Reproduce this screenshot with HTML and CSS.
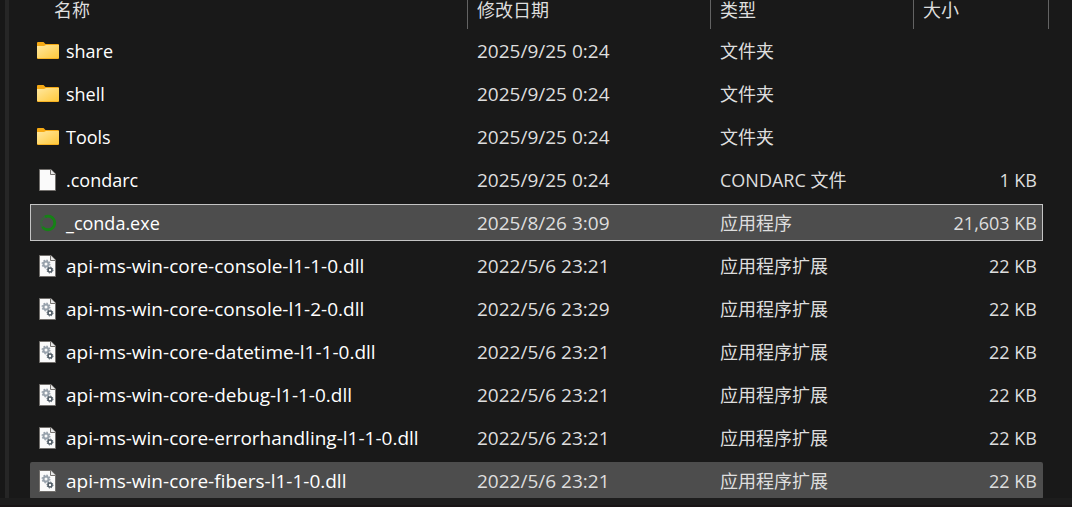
FILE: index.html
```html
<!DOCTYPE html>
<html lang="zh-CN">
<head>
    <meta charset="UTF-8">
    <meta name="viewport" content="width=device-width, initial-scale=1.0">
    <title>文件列表</title>
    <link rel="stylesheet" href="styles.css">
</head>
<body>
    <!-- Icon shapes shared by the rows -->
    <svg class="icon-defs" aria-hidden="true">
        <linearGradient id="folder-fill" x1="0" y1="0" x2="1" y2="1">
            <stop offset="0" stop-color="#ffe8a0"/>
            <stop offset="1" stop-color="#ffc83a"/>
        </linearGradient>
        <symbol id="icon-folder" viewBox="0 0 22 22">
            <path d="M0 3Q0 2 1 2H6.500L8.500 4H21Q22 4 22 5V18Q22 19 21 19H1Q0 19 0 18Z" fill="#f5a914"/>
            <path d="M0 6H7L9 5H22V17.500Q22 18.300 21 18.300H1Q0 18.300 0 17.500Z" fill="url(#folder-fill)"/>
        </symbol>
        <symbol id="icon-page" viewBox="0 0 22 22">
            <path d="M2.500 .5H14L18.500 5V21.500H2.500Z" fill="#fafafa" stroke="#73706d"/>
            <path d="M13.500 .5V5.500H18.500" fill="#e8e8e8" stroke="#73706d"/>
        </symbol>
        <symbol id="icon-dll" viewBox="0 0 22 22">
            <use href="#icon-page"/>
            <circle cx="9" cy="9" r="2.500" fill="none" stroke="#98a2ac" stroke-width="2"/>
            <circle cx="9" cy="9" r="3.800" fill="none" stroke="#98a2ac" stroke-width="1.400" stroke-dasharray="1.500 1.480"/>
            <circle cx="13" cy="15" r="2" fill="none" stroke="#505c66" stroke-width="1.600"/>
            <circle cx="13" cy="15" r="3" fill="none" stroke="#505c66" stroke-width="1" stroke-dasharray="1.200 1.150"/>
        </symbol>
        <symbol id="icon-conda" viewBox="0 0 22 22">
            <circle cx="11" cy="11" r="6.800" fill="none" stroke="#35673a" stroke-width="2.400" stroke-dasharray="1.500 .6"/>
            <path d="M8 4.800A6.800 6.800 0 1 1 5.500 15" fill="none" stroke="#168216" stroke-width="2.800"/>
        </symbol>
    </svg>

    <div class="window">
        <div class="content">
            <div class="nav-edge"></div>
            <main class="file-list">
                <table>
                    <colgroup>
                        <col class="col-name">
                        <col class="col-date">
                        <col class="col-type">
                        <col class="col-size">
                        <col class="col-end">
                    </colgroup>
                    <thead>
                        <tr>
                            <th>名称</th>
                            <th>修改日期</th>
                            <th>类型</th>
                            <th colspan="2">大小</th>
                        </tr>
                    </thead>
                    <tbody>
                        <tr>
                            <td><svg class="icon"><use href="#icon-folder"/></svg>share</td>
                            <td>2025/9/25 0:24</td>
                            <td>文件夹</td>
                            <td></td>
                        </tr>
                        <tr>
                            <td><svg class="icon"><use href="#icon-folder"/></svg>shell</td>
                            <td>2025/9/25 0:24</td>
                            <td>文件夹</td>
                            <td></td>
                        </tr>
                        <tr>
                            <td><svg class="icon"><use href="#icon-folder"/></svg>Tools</td>
                            <td>2025/9/25 0:24</td>
                            <td>文件夹</td>
                            <td></td>
                        </tr>
                        <tr>
                            <td><svg class="icon"><use href="#icon-page"/></svg>.condarc</td>
                            <td>2025/9/25 0:24</td>
                            <td>CONDARC 文件</td>
                            <td>1 KB</td>
                        </tr>
                        <tr class="selected focused">
                            <td><svg class="icon"><use href="#icon-conda"/></svg>_conda.exe</td>
                            <td>2025/8/26 3:09</td>
                            <td>应用程序</td>
                            <td>21,603 KB</td>
                        </tr>
                        <tr class="library">
                            <td><svg class="icon"><use href="#icon-dll"/></svg>api-ms-win-core-console-l1-1-0.dll</td>
                            <td>2022/5/6 23:21</td>
                            <td>应用程序扩展</td>
                            <td>22 KB</td>
                        </tr>
                        <tr class="library">
                            <td><svg class="icon"><use href="#icon-dll"/></svg>api-ms-win-core-console-l1-2-0.dll</td>
                            <td>2022/5/6 23:29</td>
                            <td>应用程序扩展</td>
                            <td>22 KB</td>
                        </tr>
                        <tr class="library">
                            <td><svg class="icon"><use href="#icon-dll"/></svg>api-ms-win-core-datetime-l1-1-0.dll</td>
                            <td>2022/5/6 23:21</td>
                            <td>应用程序扩展</td>
                            <td>22 KB</td>
                        </tr>
                        <tr class="library">
                            <td><svg class="icon"><use href="#icon-dll"/></svg>api-ms-win-core-debug-l1-1-0.dll</td>
                            <td>2022/5/6 23:21</td>
                            <td>应用程序扩展</td>
                            <td>22 KB</td>
                        </tr>
                        <tr class="library">
                            <td><svg class="icon"><use href="#icon-dll"/></svg>api-ms-win-core-errorhandling-l1-1-0.dll</td>
                            <td>2022/5/6 23:21</td>
                            <td>应用程序扩展</td>
                            <td>22 KB</td>
                        </tr>
                        <tr class="library selected">
                            <td><svg class="icon"><use href="#icon-dll"/></svg>api-ms-win-core-fibers-l1-1-0.dll</td>
                            <td>2022/5/6 23:21</td>
                            <td>应用程序扩展</td>
                            <td>22 KB</td>
                        </tr>
                    </tbody>
                </table>
            </main>
        </div>
        <footer class="status-bar"></footer>
    </div>
</body>
</html>
```
FILE: styles.css
```css
* {
    box-sizing: border-box;
}

body {
    margin: 0;
    background-color: #191919;
    color: #dedede;
    font-family: "Open Sans", "Noto Sans CJK SC", sans-serif;
    font-size: 18px;
    line-height: 24px;
}

.icon-defs {
    position: absolute;
    width: 0;
    height: 0;
}

.window {
    display: flex;
    flex-direction: column;
    height: 100vh;
}

.content {
    display: flex;
    flex: 1;
    min-height: 0;
}

.nav-edge {
    width: 9px;
    border-right: 4px solid #262626;
    background-color: #171717;
}

.file-list {
    flex: 1;
    min-width: 0;
    padding: 0 23px 0 21px;
    overflow: hidden;
}

table {
    width: 100%;
    table-layout: fixed;
    border-collapse: separate;
    border-spacing: 0;
}

.col-date {
    width: 243px;
}

.col-type {
    width: 203px;
}

.col-size {
    width: 129px;
}

.col-end {
    width: 6px;
}

th {
    height: 29px;
    padding: 0 9px 8px;
    border-right: 1px solid #636363;
    font-weight: normal;
    line-height: 21px;
    text-align: left;
}

th:first-child {
    padding-left: 24px;
}

/* The transparent borders leave a gap between highlighted rows */
td {
    height: 43px;
    padding: 0 9px;
    border: solid transparent;
    border-width: 3px 0;
    background-clip: padding-box;
    white-space: nowrap;
}

td:first-child {
    padding-left: 7px;
    color: #fff;
}

td:nth-child(2),
.library td:first-child {
    font-size: 19px;
}

td:nth-child(4) {
    padding-right: 6px;
    text-align: right;
}

.icon {
    width: 22px;
    height: 22px;
    margin-right: 7px;
    vertical-align: -4px;
}

.selected td {
    background-color: #4d4d4d;
}

.selected td:first-child {
    border-radius: 2px 0 0 2px / 5px 0 0 5px;
}

.selected td:last-child {
    border-radius: 0 2px 2px 0 / 0 5px 5px 0;
}

.focused td {
    box-shadow: inset 0 1px #c4c4c4, inset 0 -1px #c4c4c4;
}

.focused td:first-child {
    border-radius: 0;
    box-shadow: inset 0 1px #c4c4c4, inset 0 -1px #c4c4c4, inset 1px 0 #c4c4c4;
}

.focused td:last-child {
    border-radius: 0;
    box-shadow: inset 0 1px #c4c4c4, inset 0 -1px #c4c4c4, inset -1px 0 #c4c4c4;
}

.status-bar {
    height: 9px;
    border-bottom: 2px solid #191516;
    background-color: #1d1d1d;
}
```
